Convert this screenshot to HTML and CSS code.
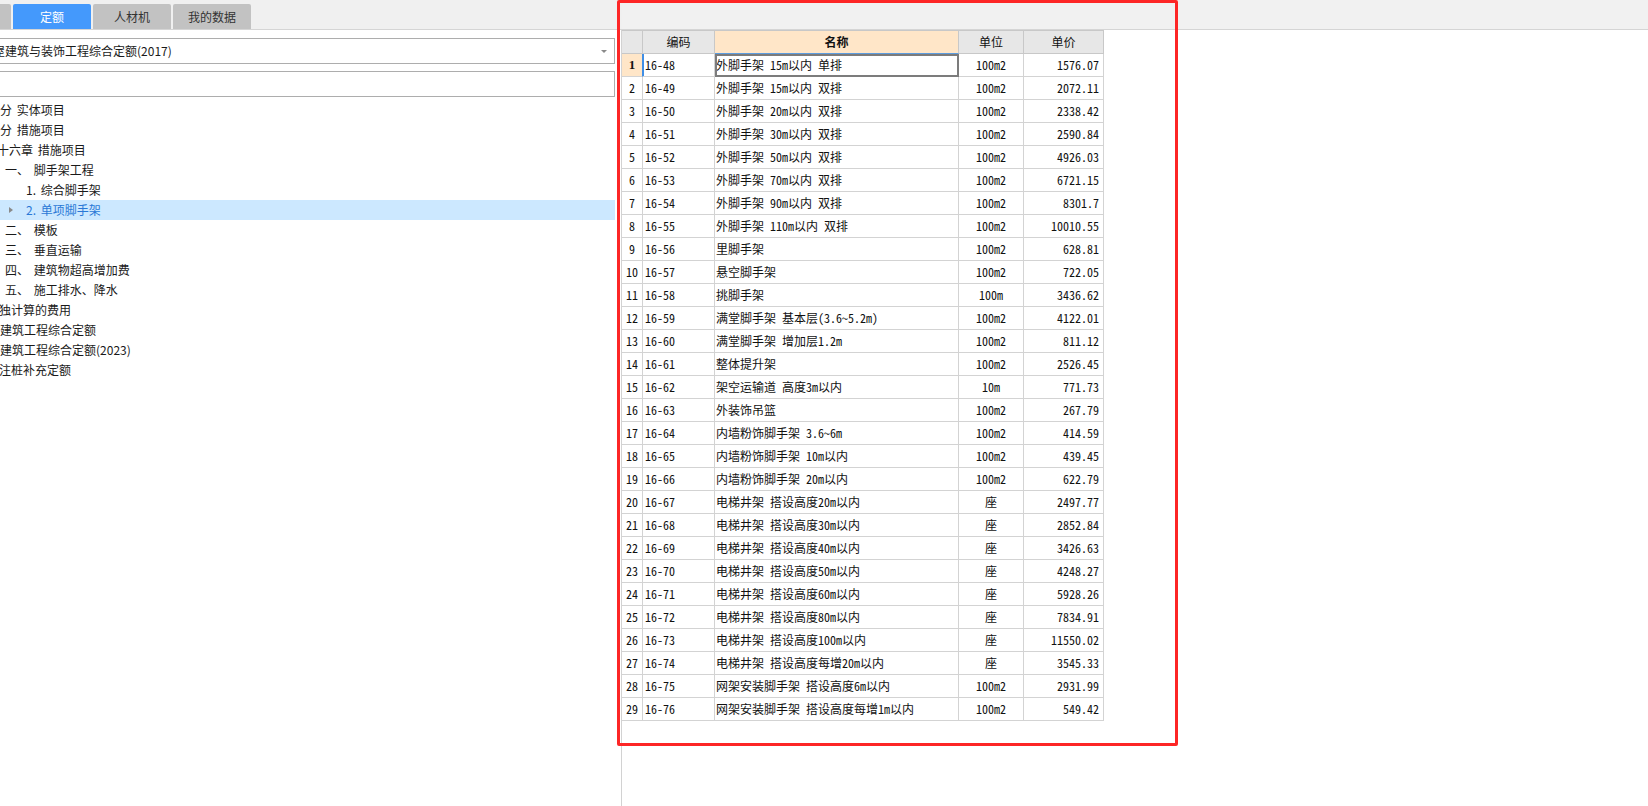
FILE: index.html
```html
<!DOCTYPE html>
<html lang="zh-CN">
<head>
<meta charset="utf-8">
<title>定额</title>
<link rel="stylesheet" href="styles.css">
</head>
<body>
<div class="app">
  <aside class="left">
    <div class="tabbar">
      <div class="tab tab-cut">清单</div>
      <div class="tab active">定额</div>
      <div class="tab">人材机</div>
      <div class="tab">我的数据</div>
    </div>
    <div class="leftbody">
      <div class="combo"><span class="combo-text">江西省房屋建筑与装饰工程综合定额(2017)</span><span class="caret"></span></div>
      <div class="search"></div>
      <ul class="tree">
        <li class="lv0">第一部分 实体项目</li>
        <li class="lv0">第二部分 措施项目</li>
        <li class="lv1">第十六章 措施项目</li>
        <li class="lv2">一、 脚手架工程</li>
        <li class="lv3">1. 综合脚手架</li>
        <li class="lv3 sel"><span class="arrow"></span>2. 单项脚手架</li>
        <li class="lv2">二、 模板</li>
        <li class="lv2">三、 垂直运输</li>
        <li class="lv2">四、 建筑物超高增加费</li>
        <li class="lv2">五、 施工排水、降水</li>
        <li class="lv1b">单独计算的费用</li>
        <li class="lv0">江西省建筑工程综合定额</li>
        <li class="lv0">江西省建筑工程综合定额(2023)</li>
        <li class="lv1b">灌注桩补充定额</li>
      </ul>
    </div>
  </aside>
  <main class="right">
    <div class="topbar"></div>
    <table class="grid">
      <thead>
        <tr>
          <th class="c-no"></th>
          <th class="c-code">编码</th>
          <th class="c-name cur">名称</th>
          <th class="c-unit">单位</th>
          <th class="c-price">单价</th>
        </tr>
      </thead>
      <tbody>
        <tr class="active-row"><td class="no cur-no">1</td><td class="code cur-code">16-48</td><td class="name sel-cell">外脚手架 15m以内 单排</td><td class="unit">100m2</td><td class="price">1576.07</td></tr>
        <tr><td class="no">2</td><td class="code">16-49</td><td class="name">外脚手架 15m以内 双排</td><td class="unit">100m2</td><td class="price">2072.11</td></tr>
        <tr><td class="no">3</td><td class="code">16-50</td><td class="name">外脚手架 20m以内 双排</td><td class="unit">100m2</td><td class="price">2338.42</td></tr>
        <tr><td class="no">4</td><td class="code">16-51</td><td class="name">外脚手架 30m以内 双排</td><td class="unit">100m2</td><td class="price">2590.84</td></tr>
        <tr><td class="no">5</td><td class="code">16-52</td><td class="name">外脚手架 50m以内 双排</td><td class="unit">100m2</td><td class="price">4926.03</td></tr>
        <tr><td class="no">6</td><td class="code">16-53</td><td class="name">外脚手架 70m以内 双排</td><td class="unit">100m2</td><td class="price">6721.15</td></tr>
        <tr><td class="no">7</td><td class="code">16-54</td><td class="name">外脚手架 90m以内 双排</td><td class="unit">100m2</td><td class="price">8301.7</td></tr>
        <tr><td class="no">8</td><td class="code">16-55</td><td class="name">外脚手架 110m以内 双排</td><td class="unit">100m2</td><td class="price">10010.55</td></tr>
        <tr><td class="no">9</td><td class="code">16-56</td><td class="name">里脚手架</td><td class="unit">100m2</td><td class="price">628.81</td></tr>
        <tr><td class="no">10</td><td class="code">16-57</td><td class="name">悬空脚手架</td><td class="unit">100m2</td><td class="price">722.05</td></tr>
        <tr><td class="no">11</td><td class="code">16-58</td><td class="name">挑脚手架</td><td class="unit">100m</td><td class="price">3436.62</td></tr>
        <tr><td class="no">12</td><td class="code">16-59</td><td class="name">满堂脚手架 基本层(3.6~5.2m)</td><td class="unit">100m2</td><td class="price">4122.01</td></tr>
        <tr><td class="no">13</td><td class="code">16-60</td><td class="name">满堂脚手架 增加层1.2m</td><td class="unit">100m2</td><td class="price">811.12</td></tr>
        <tr><td class="no">14</td><td class="code">16-61</td><td class="name">整体提升架</td><td class="unit">100m2</td><td class="price">2526.45</td></tr>
        <tr><td class="no">15</td><td class="code">16-62</td><td class="name">架空运输道 高度3m以内</td><td class="unit">10m</td><td class="price">771.73</td></tr>
        <tr><td class="no">16</td><td class="code">16-63</td><td class="name">外装饰吊篮</td><td class="unit">100m2</td><td class="price">267.79</td></tr>
        <tr><td class="no">17</td><td class="code">16-64</td><td class="name">内墙粉饰脚手架 3.6~6m</td><td class="unit">100m2</td><td class="price">414.59</td></tr>
        <tr><td class="no">18</td><td class="code">16-65</td><td class="name">内墙粉饰脚手架 10m以内</td><td class="unit">100m2</td><td class="price">439.45</td></tr>
        <tr><td class="no">19</td><td class="code">16-66</td><td class="name">内墙粉饰脚手架 20m以内</td><td class="unit">100m2</td><td class="price">622.79</td></tr>
        <tr><td class="no">20</td><td class="code">16-67</td><td class="name">电梯井架 搭设高度20m以内</td><td class="unit">座</td><td class="price">2497.77</td></tr>
        <tr><td class="no">21</td><td class="code">16-68</td><td class="name">电梯井架 搭设高度30m以内</td><td class="unit">座</td><td class="price">2852.84</td></tr>
        <tr><td class="no">22</td><td class="code">16-69</td><td class="name">电梯井架 搭设高度40m以内</td><td class="unit">座</td><td class="price">3426.63</td></tr>
        <tr><td class="no">23</td><td class="code">16-70</td><td class="name">电梯井架 搭设高度50m以内</td><td class="unit">座</td><td class="price">4248.27</td></tr>
        <tr><td class="no">24</td><td class="code">16-71</td><td class="name">电梯井架 搭设高度60m以内</td><td class="unit">座</td><td class="price">5928.26</td></tr>
        <tr><td class="no">25</td><td class="code">16-72</td><td class="name">电梯井架 搭设高度80m以内</td><td class="unit">座</td><td class="price">7834.91</td></tr>
        <tr><td class="no">26</td><td class="code">16-73</td><td class="name">电梯井架 搭设高度100m以内</td><td class="unit">座</td><td class="price">11550.02</td></tr>
        <tr><td class="no">27</td><td class="code">16-74</td><td class="name">电梯井架 搭设高度每增20m以内</td><td class="unit">座</td><td class="price">3545.33</td></tr>
        <tr><td class="no">28</td><td class="code">16-75</td><td class="name">网架安装脚手架 搭设高度6m以内</td><td class="unit">100m2</td><td class="price">2931.99</td></tr>
        <tr><td class="no">29</td><td class="code">16-76</td><td class="name">网架安装脚手架 搭设高度每增1m以内</td><td class="unit">100m2</td><td class="price">549.42</td></tr>
      </tbody>
    </table>
  </main>
  <div class="mark"></div>
</div>
</body>
</html>
```

FILE: styles.css
```css
* { box-sizing: border-box; }
html, body { margin: 0; padding: 0; background: #fff; }
body {
  width: 1648px;
  height: 806px;
  overflow: hidden;
  font-family: "Noto Sans CJK SC", "Liberation Sans", sans-serif;
  font-size: 12px;
  color: #1a1a1a;
}
.app {
  position: relative;
  display: flex;
  height: 806px;
}

/* ---------- left panel ---------- */
.left {
  width: 622px;
  flex: none;
  display: flex;
  flex-direction: column;
  overflow: hidden;
}
.tabbar {
  height: 30px;
  flex: none;
  background: #f0f0f0;
  border-bottom: 1px solid #d5d5d5;
  display: flex;
  align-items: flex-end;
  gap: 2px;
  padding-left: 0;
}
.tab {
  width: 78px;
  height: 25px;
  flex: none;
  background: #c2c2c2;
  color: #333;
  border-radius: 2px 2px 0 0;
  display: flex;
  align-items: center;
  justify-content: center;
  line-height: 1;
}
.tab-cut { margin-left: -67px; }
.tab.active { background: #4499fc; color: #fff; }

.leftbody {
  flex: 1;
  border-right: 1px solid #d2d2d2;
  overflow: hidden;
  padding-top: 8px;
}
.combo {
  position: relative;
  height: 26px;
  margin: 0 6px 0 -10px;
  border: 1px solid #adadad;
  overflow: hidden;
  white-space: nowrap;
  line-height: 24px;
  padding-left: 2px;
}
.combo-text { display: inline-block; margin-left: -48px; }
.caret {
  position: absolute;
  right: 7px;
  top: 11px;
  width: 0;
  height: 0;
  border-left: 3px solid transparent;
  border-right: 3px solid transparent;
  border-top: 3px solid #8a8a8a;
}
.search {
  height: 26px;
  margin: 7px 6px 0 -10px;
  border: 1px solid #adadad;
}
.tree {
  list-style: none;
  margin: 3px 6px 0 0;
  padding: 0;
}
.tree li {
  position: relative;
  height: 20px;
  line-height: 20px;
  white-space: nowrap;
  word-spacing: 2px;
}
.tree .lv0 { text-indent: -36px; }
.tree .lv1 { text-indent: -15px; }
.tree .lv1b { text-indent: -13px; }
.tree .lv2 { text-indent: 5px; }
.tree .lv3 { text-indent: 26px; }
.tree .sel { background: #cce8ff; color: #2a78d6; }
.arrow {
  position: absolute;
  left: 9px;
  top: 7px;
  width: 0;
  height: 0;
  border-top: 3px solid transparent;
  border-bottom: 3px solid transparent;
  border-left: 4px solid #8a8a8a;
}

/* ---------- right panel ---------- */
.right {
  flex: 1;
  display: flex;
  flex-direction: column;
  align-items: flex-start;
}
.topbar {
  height: 30px;
  width: 100%;
  flex: none;
  background: #f1f1f1;
  border-bottom: 1px solid #d5d5d5;
}
.grid {
  border-collapse: separate;
  border-spacing: 0;
  table-layout: fixed;
  width: 482px;
  font-family: "Noto Sans Mono CJK SC", "Noto Sans CJK SC", monospace;
  font-size: 12px;
  color: #111;
}
.grid thead tr { height: 24px; }
.grid tbody tr { height: 23px; }
.grid th, .grid td {
  padding: 0 2px;
  border-right: 1px solid #d3d3d3;
  border-bottom: 1px solid #d3d3d3;
  white-space: nowrap;
  overflow: hidden;
  line-height: 20px;
}
.grid th {
  background: #e7e7e7;
  border-top: 1px solid #c8c8c8;
  border-right-color: #c8c8c8;
  border-bottom-color: #c8c8c8;
  font-weight: normal;
  text-align: center;
}
.grid th.c-no { width: 21px; }
.grid th.c-code { width: 72px; }
.grid th.c-name { width: 244px; }
.grid th.c-unit { width: 65px; }
.grid th.c-price { width: 80px; }
.grid th.cur {
  background: #ffe6c8;
  font-weight: bold;
  border-bottom-color: #5c9de0;
}
.grid td.no { text-align: center; padding: 0; }
.grid td.cur-no {
  background: #ffe6c8;
  font-weight: bold;
  font-family: "Liberation Serif", serif;
  font-size: 13px;
  border-right-color: #3f8ee6;
}
.grid td.cur-code { box-shadow: inset 1px 0 0 #3f8ee6; }
.grid td.code { padding-left: 2px; }
.grid td.name { padding-left: 1px; }
.grid td.unit { text-align: center; }
.grid td.price { text-align: right; padding-right: 4px; }
.grid td.sel-cell {
  outline: 2px solid #7c7c7c;
  outline-offset: -2px;
}

/* annotation rectangle drawn over the screenshot */
.mark {
  position: absolute;
  left: 617px;
  top: 0;
  width: 561px;
  height: 746px;
  border: 3px solid #fd2626;
  border-radius: 2px;
  pointer-events: none;
}
```
